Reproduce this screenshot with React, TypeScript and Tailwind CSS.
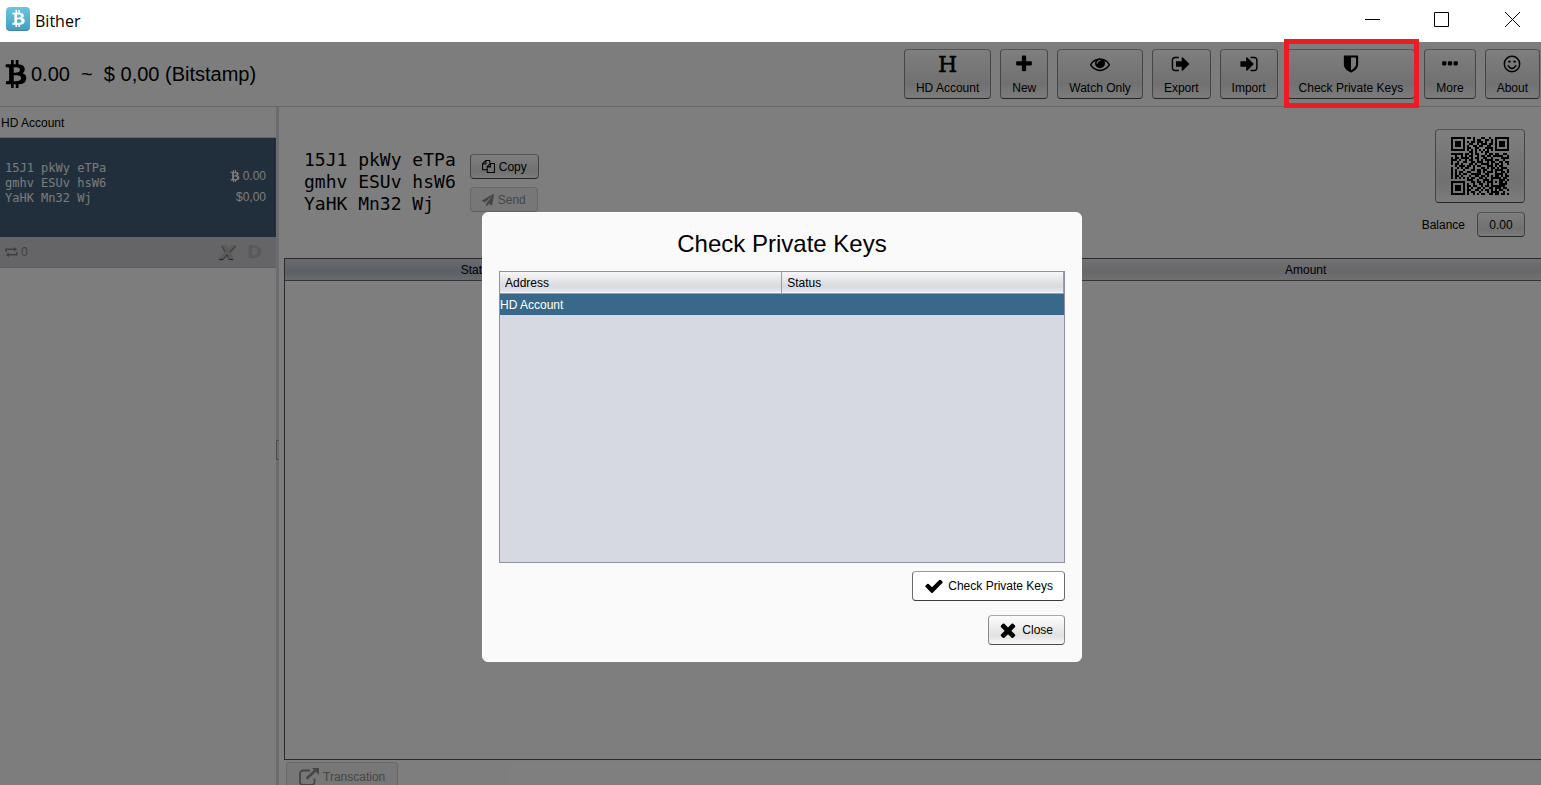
import type { ReactNode } from 'react'
import { FaBtc, FaPaperPlane } from 'react-icons/fa'

const ICONS = {
  plus: 'M1600 736v192q0 40-28 68t-68 28h-416v416q0 40-28 68t-68 28h-192q-40 0-68-28t-28-68v-416h-416q-40 0-68-28t-28-68v-192q0-40 28-68t68-28h416v-416q0-40 28-68t68-28h192q40 0 68 28t28 68v416h416q40 0 68 28t28 68z',
  eye: 'M1664 960q-152-236-381-353 61 104 61 225 0 185-131.5 316.5t-316.5 131.5-316.5-131.5-131.5-316.5q0-121 61-225-229 117-381 353 133 205 333.5 326.5t434.5 121.5 434.5-121.5 333.5-326.5zm-720-384q0-20-14-34t-34-14q-125 0-214.5 89.5t-89.5 214.5q0 20 14 34t34 14 34-14 14-34q0-86 61-147t147-61q20 0 34-14t14-34zm848 384q0 34-20 69-140 230-376.5 368.5t-499.5 138.5-499.5-139-376.5-368q-20-35-20-69t20-69q140-229 376.5-368t499.5-139 499.5 139 376.5 368q20 35 20 69z',
  signOut:
    'M704 1440q0 4 1 20t.5 26.5-3 23.5-10 19.5-20.5 6.5h-320q-119 0-203.5-84.5t-84.5-203.5v-704q0-119 84.5-203.5t203.5-84.5h320q13 0 22.5 9.5t9.5 22.5q0 4 1 20t.5 26.5-3 23.5-10 19.5-20.5 6.5h-320q-66 0-113 47t-47 113v704q0 66 47 113t113 47h312l11.5 1 11.5 3 8 5.5 7 9 2 13.5zm928-544q0 26-19 45l-544 544q-19 19-45 19t-45-19-19-45v-288h-448q-26 0-45-19t-19-45v-384q0-26 19-45t45-19h448v-288q0-26 19-45t45-19 45 19l544 544q19 19 19 45z',
  signIn:
    'M1312 896q0 26-19 45l-544 544q-19 19-45 19t-45-19-19-45v-288h-448q-26 0-45-19t-19-45v-384q0-26 19-45t45-19h448v-288q0-26 19-45t45-19 45 19l544 544q19 19 19 45zm352-352v704q0 119-84.5 203.5t-203.5 84.5h-320q-13 0-22.5-9.5t-9.5-22.5q0-4-1-20t-.5-26.5 3-23.5 10-19.5 20.5-6.5h320q66 0 113-47t47-113v-704q0-66-47-113t-113-47h-312l-11.5-1-11.5-3-8-5.5-7-9-2-13.5q0-4-1-20t-.5-26.5 3-23.5 10-19.5 20.5-6.5h320q119 0 203.5 84.5t84.5 203.5z',
  shield:
    'M1344 960v-640h-448v1137q119-63 213-137 235-184 235-360zm192-768v768q0 86-33.5 170.5t-83 150-118 127.5-126.5 103-121 77.5-89.5 49.5-42.5 20q-12 6-26 6t-26-6q-16-7-42.5-20t-89.5-49.5-121-77.5-126.5-103-118-127.5-83-150-33.5-170.5v-768q0-26 19-45t45-19h1152q26 0 45 19t19 45z',
  dots: 'M576 736v192q0 40-28 68t-68 28h-192q-40 0-68-28t-28-68v-192q0-40 28-68t68-28h192q40 0 68 28t28 68zm512 0v192q0 40-28 68t-68 28h-192q-40 0-68-28t-28-68v-192q0-40 28-68t68-28h192q40 0 68 28t28 68zm512 0v192q0 40-28 68t-68 28h-192q-40 0-68-28t-28-68v-192q0-40 28-68t68-28h192q40 0 68 28t28 68z',
  check:
    'M1671 566q0 40-28 68l-724 724-136 136q-28 28-68 28t-68-28l-136-136-362-362q-28-28-28-68t28-68l136-136q28-28 68-28t68 28l294 295 656-657q28-28 68-28t68 28l136 136q28 28 28 68z',
  times:
    'M1490 1322q0 40-28 68l-136 136q-28 28-68 28t-68-28l-294-294-294 294q-28 28-68 28t-68-28l-136-136q-28-28-28-68t28-68l294-294-294-294q-28-28-28-68t28-68l136-136q28-28 68-28t68 28l294 294 294-294q28-28 68-28t68 28l136 136q28 28 28 68t-28 68l-294 294 294 294q28 28 28 68z',
}

const QR = [
  '#######.##.#...##..#..#######',
  '#.....#....#.##..##.#.#.....#',
  '#.###.#.#.##.###.#..#.#.###.#',
  '#.###.#..##..#.###.##.#.###.#',
  '#.###.#.#..##.##..##..#.###.#',
  '#.....#.##..##...####.#.....#',
  '#######.#.#.#.#.#.#.#.#######',
  '.........##.#..#.##..........',
  '######.##.#.##...#.##.##..##.',
  '..#..#.#.##..#.##.##.#####..#',
  '#.##.####.#.##..##..#....####',
  '###.#..#.##..#.#.####.##..#..',
  '#..#..##..##.###..#.##..##.##',
  '#.##.#...##.#..####.#.##.#..#',
  '..#.###.##.#.##...###.#.##...',
  '#..#.#.##..#...##.#.##.#.###.',
  '#.#...#...##.##.##..#.####..#',
  '#.#.##..##...##.#.###.#..##.#',
  '#.#.#.##..#####..##...####.#.',
  '#.##.#...#..##.##.#.#.##.#.##',
  '#.#.#.#.#.##..##.#..#####.##.',
  '........###..#..###.#...###.#',
  '#######...##.##.#.###.#.##.#.',
  '#.....#.#..#..##..#.#...####.',
  '#.###.#.##.##..#.##.#######..',
  '#.###.#.#.#..##.#..##.###.##.',
  '#.###.#.##..##.#.##.#.#.##..#',
  '#.....#.#.##..#...#.####..#..',
  '#######.#..#.#.##..##.##.##.#',
]

const ADDRESS = ['15J1 pkWy eTPa', 'gmhv ESUv hsW6', 'YaHK Mn32 Wj']

const MONO = "font-['DejaVu_Sans_Mono',monospace]"
const BUTTON =
  'rounded border border-[#8a8a8a] border-t-[#a8a8a8] border-b-[#4c4c4c] bg-linear-to-b from-[#fdfdfd] via-[#e2e2e2] via-70% to-[#f8f8f8] text-black'
const BUTTON_OFF = 'rounded border border-[#cfcfcf] border-b-[#bdbdbd] bg-[#efefef] text-[#8c8c8c]'

function Icon({ name, size = 20 }: { name: keyof typeof ICONS; size?: number }) {
  return (
    <svg width={size} height={size} viewBox="0 0 1792 1792" fill="currentColor" aria-hidden="true">
      <path d={ICONS[name]} />
    </svg>
  )
}

function Smile() {
  return (
    <svg width="18" height="18" viewBox="0 0 18 18" fill="none" stroke="currentColor" strokeWidth="1.5" aria-hidden="true">
      <circle cx="9" cy="9" r="7.7" />
      <path d="M5.3 10.8c.6 1.6 2 2.6 3.7 2.6s3.1-1 3.7-2.6" strokeLinecap="round" />
      <circle cx="6.4" cy="6.6" r="1.2" fill="currentColor" stroke="none" />
      <circle cx="11.6" cy="6.6" r="1.2" fill="currentColor" stroke="none" />
    </svg>
  )
}

function Files() {
  return (
    <svg width="13" height="13" viewBox="0 0 14 14" fill="none" stroke="currentColor" strokeWidth="1.1" strokeLinejoin="round" aria-hidden="true">
      <path d="M5.5 10.4H.6V4L4 .6h4.4v3.2M4.2.8v3.4H.8" />
      <path d="M5.6 13.4V7.2L9 3.8h4.4v9.6zM9.2 4v3.4H5.8" />
    </svg>
  )
}

function Retweet() {
  return (
    <svg width="13" height="10" viewBox="0 0 13 10" fill="none" stroke="currentColor" strokeWidth="1.5" aria-hidden="true">
      <path d="M1.2 5V2.2h8.300M11.800 5v2.800H3.500" />
      <path d="M9 0v4.400l3.200-2.200zM4 10V5.600L.8 7.800z" fill="currentColor" stroke="none" />
    </svg>
  )
}

function ExternalLink() {
  return (
    <svg width="20" height="18" viewBox="0 0 20 18" fill="none" stroke="currentColor" strokeWidth="1.8" aria-hidden="true">
      <path d="M11 2.5H4a3 3 0 0 0-3 3V14a3 3 0 0 0 3 3h8.5a3 3 0 0 0 3-3v-3.5" />
      <path d="M7.5 10.8 16 2.8" strokeWidth="2.6" />
      <path d="M13 0h7v7z" fill="currentColor" stroke="none" />
    </svg>
  )
}

function QrCode() {
  return (
    <svg width="58" height="58" viewBox="0 0 29 29" shapeRendering="crispEdges" aria-hidden="true">
      {QR.map((row, y) =>
        row.split('').map((c, x) => (c === '#' ? <rect key={`${x}-${y}`} x={x} y={y} width="1" height="1" /> : null)),
      )}
    </svg>
  )
}

function ToolButton({ icon, label, marked }: { icon: ReactNode; label: string; marked?: boolean }) {
  return (
    <div className="relative">
      <button type="button" className={`flex h-[50px] flex-col items-center px-[11px] whitespace-nowrap ${BUTTON}`}>
        <span className="flex h-7 items-center">{icon}</span>
        <span className="leading-5">{label}</span>
      </button>
      {marked && <span className="pointer-events-none absolute -top-[10px] -right-1 -bottom-[9px] -left-[3px] z-30 border-5 border-[#ed1c24]" />}
    </div>
  )
}

function TitleBar() {
  return (
    <header className="flex h-[42px] shrink-0 items-center bg-white pl-1.5">
      <span className="mb-1 flex size-6 items-center justify-center rounded border-b border-[#4a8299] bg-linear-to-b from-[#6cc5e0] to-[#3f9fc4] text-white">
        <FaBtc size={17} />
      </span>
      <h1 className="ml-[5px] flex-1 font-['Open_Sans',sans-serif] text-base">Bither</h1>
      <div className="mb-1 flex items-center">
        <button type="button" aria-label="Minimize" className="flex h-9 w-[69px] items-center justify-center">
          <svg width="15" height="15" viewBox="0 0 15 15" stroke="black">
            <path d="M0 7.5h15" />
          </svg>
        </button>
        <button type="button" aria-label="Maximize" className="flex h-9 w-[69px] items-center justify-center">
          <svg width="15" height="15" viewBox="0 0 15 15" fill="none" stroke="black">
            <path d="M.5.5h14v14H.5z" />
          </svg>
        </button>
        <button type="button" aria-label="Close window" className="flex h-9 w-[65px] items-center justify-end pr-[21px]">
          <svg width="15" height="15" viewBox="0 0 15 15" stroke="black">
            <path d="m0 0 15 15M15 0 0 15" />
          </svg>
        </button>
      </div>
    </header>
  )
}

function Toolbar() {
  return (
    <div className="flex h-[65px] shrink-0 items-center justify-between border-b border-[#cfcfcf] pr-px pl-0.5">
      <p className="flex items-center text-xl whitespace-pre">
        <FaBtc size={28} />
        <span className="ml-px">0.00  ~  $ 0,00 (Bitstamp)</span>
      </p>
      <nav className="flex gap-[9px]">
        <ToolButton
          icon={<span className="pt-0.5 font-['DejaVu_Serif',serif] text-[22px] [-webkit-text-stroke:0.5px_black]">H</span>}
          label="HD Account"
        />
        <ToolButton icon={<Icon name="plus" />} label="New" />
        <ToolButton icon={<Icon name="eye" />} label="Watch Only" />
        <ToolButton icon={<Icon name="signOut" />} label="Export" />
        <ToolButton icon={<Icon name="signIn" />} label="Import" />
        <ToolButton icon={<Icon name="shield" />} label="Check Private Keys" marked />
        <ToolButton icon={<Icon name="dots" />} label="More" />
        <ToolButton icon={<Smile />} label="About" />
      </nav>
    </div>
  )
}

function Sidebar() {
  return (
    <aside className="w-[276px] shrink-0">
      <h2 className="h-[31px] border-b border-[#c8c8d0] pl-px leading-8">HD Account</h2>
      <div className="flex h-[99px] items-center justify-between bg-[#425c76] pr-2.5 pb-0.5 pl-[5px] text-[#f4f4f4]">
        <p className={`pb-1.5 leading-[15px] ${MONO}`}>
          {ADDRESS.map((line) => (
            <span key={line} className="block">
              {line}
            </span>
          ))}
        </p>
        <p className="text-right leading-[21px]">
          <span className="flex items-center justify-end gap-0.5">
            <FaBtc size={12} />
            0.00
          </span>
          $0,00
        </p>
      </div>
      <div className="flex h-[31px] items-center border-b border-[#bcbcc0] bg-[#cacace] pr-3.5 pl-[5px] text-[#7c7c7c]">
        <Retweet />
        <span className="ml-[3px] flex-1">0</span>
        <span className="mr-3 font-['DejaVu_Sans',sans-serif] text-xl font-bold text-[#b6b6b6] italic [text-shadow:0_1px_1px_#333]">X</span>
        <span className="font-['DejaVu_Sans',sans-serif] text-lg font-bold text-[#b2b2b6]">D</span>
      </div>
    </aside>
  )
}

function AccountHeader() {
  return (
    <div className="flex h-[151px] shrink-0 items-start justify-between pt-[22px] pr-4 pl-[25px]">
      <div className="flex">
        <p className={`mt-5 text-lg leading-[22px] ${MONO}`}>
          {ADDRESS.map((line) => (
            <span key={line} className="block">
              {line}
            </span>
          ))}
        </p>
        <div className="mt-[25px] ml-3.5 flex flex-col items-start gap-2">
          <button type="button" className={`flex h-[25px] items-center gap-1 px-[11px] ${BUTTON}`}>
            <Files />
            Copy
          </button>
          <button type="button" disabled className={`flex h-[25px] items-center gap-1 px-[11px] ${BUTTON_OFF}`}>
            <FaPaperPlane size={12} />
            Send
          </button>
        </div>
      </div>
      <div className="flex flex-col items-end gap-[9px]">
        <button type="button" aria-label="Show QR code" className={`flex h-[74px] w-[90px] items-center justify-center ${BUTTON}`}>
          <QrCode />
        </button>
        <div className="flex items-center gap-3">
          <span>Balance</span>
          <button type="button" className={`h-[25px] w-12 ${BUTTON}`}>
            0.00
          </button>
        </div>
      </div>
    </div>
  )
}

function Transactions() {
  return (
    <div className="ml-[5px] flex-1 border-y border-l border-[#555]">
      <table className="w-full table-fixed border-collapse">
        <thead>
          <tr className="h-[21px] border-b border-[#6a6a6a] bg-linear-to-b from-[#e4e4e8] via-[#d0d0d4] via-60% to-[#dedee4]">
            <th className="w-[31%] bg-linear-to-b from-[#d4d8de] via-[#b4c0ca] via-60% to-[#ccd8de] p-0 pt-0.5 pr-1 font-normal">Status</th>
            <td />
            <th className="w-[37%] p-0 pt-0.5 pr-1.5 font-normal">Amount</th>
          </tr>
        </thead>
      </table>
    </div>
  )
}

function CheckKeysDialog() {
  return (
    <div
      role="dialog"
      aria-labelledby="dialog-title"
      className="flex h-[450px] w-[600px] flex-col items-end rounded-md border border-white bg-[#fafafa] p-4"
    >
      <h2 id="dialog-title" className="w-full text-center text-2xl leading-[30px]">
        Check Private Keys
      </h2>
      <div className="mt-3 w-full flex-1 border border-[#8f93a0] bg-[#d6d9e1]">
        <table className="w-full table-fixed border-collapse text-left">
          <thead>
            <tr className="h-[21px] border-b border-[#9a9dab] bg-linear-to-b from-[#f8f8fa] via-[#d8dade] via-70% to-[#e4e8f2]">
              <th className="border-r border-[#9a9dab] p-0 pt-0.5 pl-[5px] font-normal">Address</th>
              <th className="border-r border-[#9a9dab] p-0 pt-0.5 pl-[5px] font-normal">Status</th>
            </tr>
          </thead>
          <tbody>
            <tr className="h-[22px] bg-[#39698a] text-white">
              <td className="p-0 pt-0.5">HD Account</td>
              <td className="p-0" />
            </tr>
          </tbody>
        </table>
      </div>
      <button
        type="button"
        className="mt-2 flex h-[30px] items-center gap-1 rounded border border-[#6a6a6a] border-t-[#9a9a9a] border-b-[#3c3c3c] bg-white px-[11px]"
      >
        <Icon name="check" />
        Check Private Keys
      </button>
      <button type="button" className={`mt-3.5 flex h-[30px] items-center gap-[3px] pr-[11px] pl-2 ${BUTTON}`}>
        <Icon name="times" size={22} />
        Close
      </button>
    </div>
  )
}

export default function App() {
  return (
    <div className="flex h-screen flex-col overflow-hidden bg-[#fafafa] font-['Liberation_Sans',Arial,sans-serif] text-xs text-black">
      <TitleBar />
      <div className="relative flex min-h-0 flex-1 flex-col">
        <Toolbar />
        <div className="flex min-h-0 flex-1">
          <Sidebar />
          <div className="flex w-[3px] shrink-0 items-center bg-[#d8d8e0] pt-2">
            <span className="h-5 w-full border-y border-l border-[#9a9aa0]" />
          </div>
          <main className="flex min-w-0 flex-1 flex-col bg-[#fdfdfd]">
            <AccountHeader />
            <Transactions />
            <div className="h-[25px] shrink-0 pt-0.5 pl-[7px]">
              <button type="button" disabled className={`flex h-[30px] items-center gap-1 px-3 ${BUTTON_OFF}`}>
                <ExternalLink />
                Transcation
              </button>
            </div>
          </main>
        </div>
        <div className="absolute inset-0 z-20 flex items-start justify-center bg-black/50 pt-[170px] pl-[23px]">
          <CheckKeysDialog />
        </div>
      </div>
    </div>
  )
}
